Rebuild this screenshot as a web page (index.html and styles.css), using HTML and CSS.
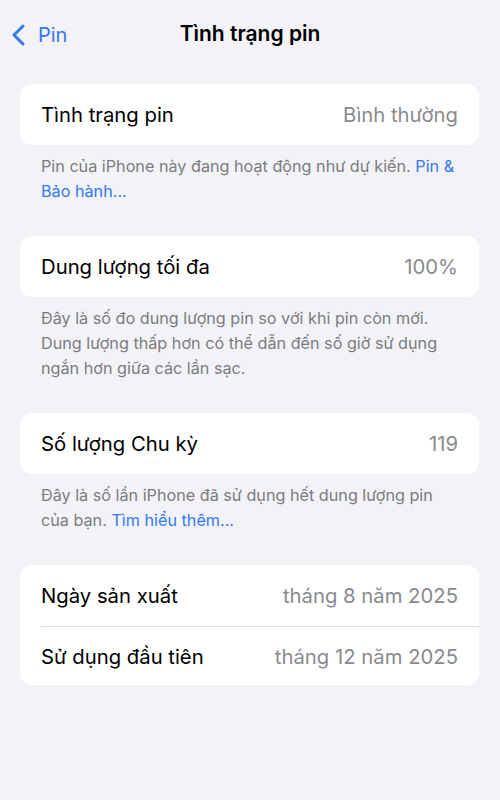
FILE: index.html
```html
<!DOCTYPE html>
<html lang="vi">
<head>
    <meta charset="UTF-8">
    <title>Tình trạng pin</title>
    <link rel="stylesheet" href="styles.css">
</head>
<body>
    <div class="nav">
        <a class="back" href="#">
            <svg width="16" height="22" viewBox="0 0 16 22"><path d="M12 2 L3 11 L12 20" fill="none" stroke="#3478f6" stroke-width="3" stroke-linecap="round" stroke-linejoin="round"/></svg>
            <span>Pin</span>
        </a>
        <h1>Tình trạng pin</h1>
    </div>

    <div class="content">
        <div class="card">
            <div class="row"><span class="label">Tình trạng pin</span><span class="value">Bình thường</span></div>
        </div>
        <p class="note">Pin của iPhone này đang hoạt động như dự kiến. <a href="#">Pin &amp; Bảo hành...</a></p>

        <div class="card">
            <div class="row"><span class="label">Dung lượng tối đa</span><span class="value">100%</span></div>
        </div>
        <p class="note">Đây là số đo dung lượng pin so với khi pin còn mới. Dung lượng thấp hơn có thể dẫn đến số giờ sử dụng ngắn hơn giữa các lần sạc.</p>

        <div class="card">
            <div class="row"><span class="label">Số lượng Chu kỳ</span><span class="value">119</span></div>
        </div>
        <p class="note">Đây là số lần iPhone đã sử dụng hết dung lượng pin của bạn. <a href="#">Tìm hiểu thêm...</a></p>

        <div class="card">
            <div class="row"><span class="label">Ngày sản xuất</span><span class="value">tháng 8 năm 2025</span></div>
            <div class="row"><span class="label">Sử dụng đầu tiên</span><span class="value">tháng 12 năm 2025</span></div>
        </div>
    </div>
</body>
</html>
```

FILE: styles.css
```css
* {
    margin: 0;
    padding: 0;
    box-sizing: border-box;
}

body {
    width: 500px;
    height: 800px;
    background-color: #f2f2f7;
    font-family: Inter, "Noto Sans", sans-serif;
    color: #000;
}

a {
    color: #3478f6;
    text-decoration: none;
}

.nav {
    height: 66px;
    position: relative;
    display: flex;
    align-items: center;
    justify-content: center;
}

.nav h1 {
    font-size: 21px;
    font-weight: 600;
}

.nav .back {
    position: absolute;
    left: 11px;
    top: 23px;
    display: flex;
    align-items: center;
    gap: 11px;
    font-size: 20px;
}

.content {
    padding: 18px 21px 0 20px;
}

.card {
    background-color: #fff;
    border-radius: 12px;
    overflow: hidden;
}

.row {
    height: 61px;
    margin-left: 21px;
    padding-right: 21px;
    display: flex;
    align-items: center;
    justify-content: space-between;
    font-size: 20.3px;
}

.row + .row {
    height: 59px;
    border-top: 1px solid #dcdce0;
}

.value {
    color: #8a8a8e;
}

.note {
    padding: 9px 14px 32px 21px;
    font-size: 16.2px;
    line-height: 25px;
    color: #7c7c80;
}
```
